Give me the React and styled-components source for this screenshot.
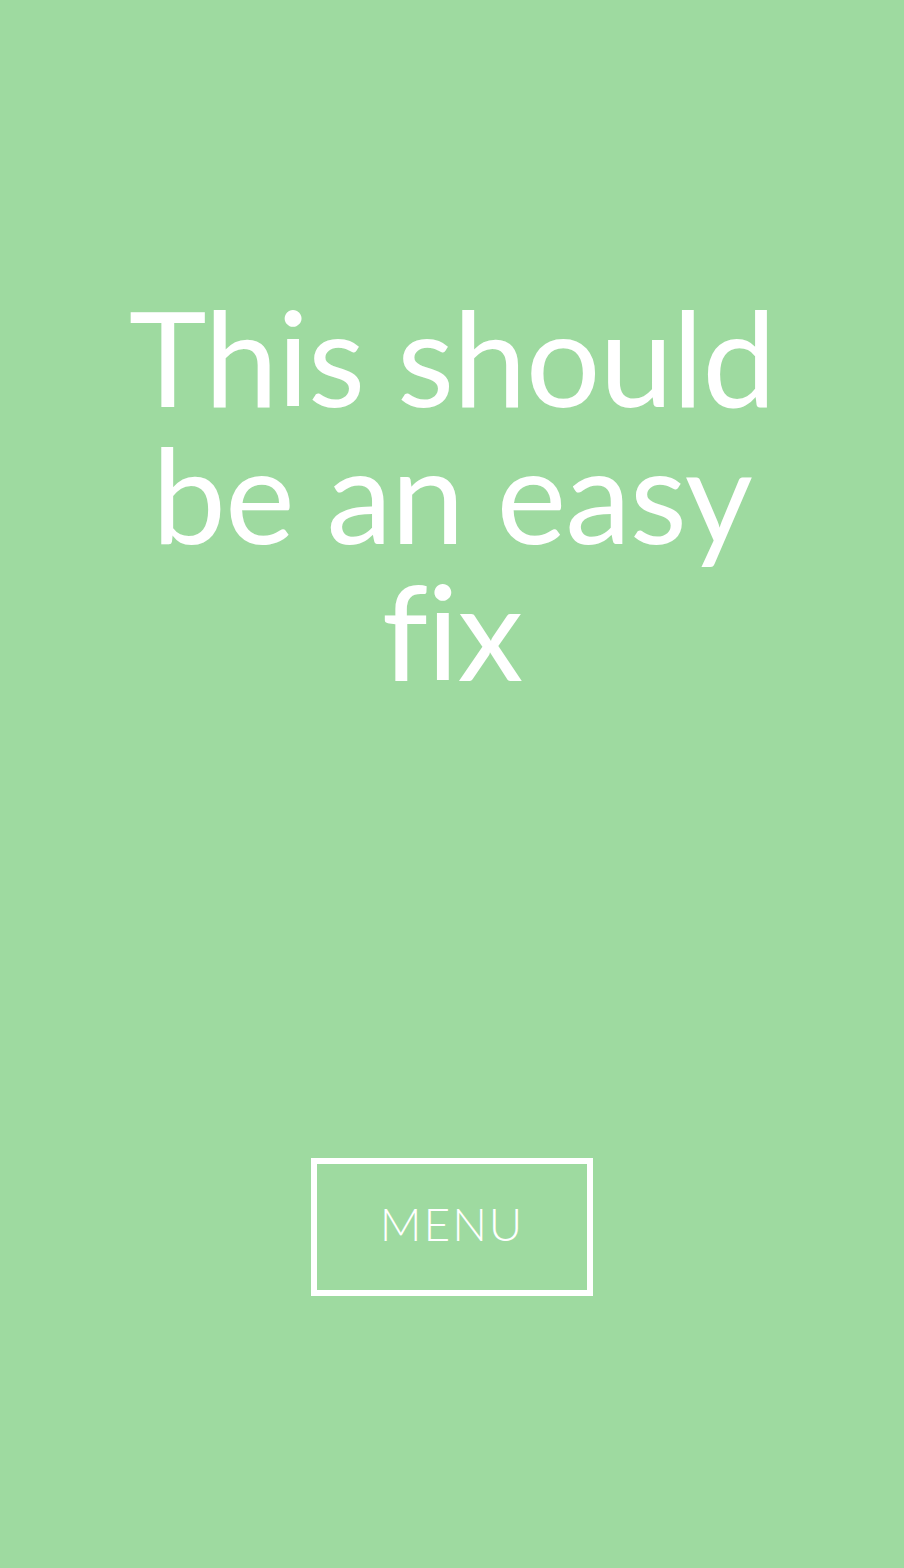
import React from "react";
import styled, { createGlobalStyle } from "styled-components";

const Global = createGlobalStyle`
  html, body { margin: 0; padding: 0; }
  body { background: #9edaa0; font-family: "Lato", "Noto Sans", sans-serif; }
`;

const Page = styled.main`
  min-height: 1568px;
  box-sizing: border-box;
  background: #9edaa0;
  display: flex;
  flex-direction: column;
  align-items: center;
  padding-top: 288px;
`;

const Title = styled.h1`
  margin: 0;
  width: 680px;
  color: #ffffff;
  font-family: "Lato", "Noto Sans", sans-serif;
  font-weight: 400;
  font-size: 132px;
  line-height: 137px;
  letter-spacing: -1px;
  text-align: center;
`;

const MenuButton = styled.button`
  margin-top: 459px;
  width: 282px;
  height: 138px;
  box-sizing: border-box;
  border: 6px solid #ffffff;
  background: transparent;
  color: #ffffff;
  font-family: "Lato", "Noto Sans", sans-serif;
  font-weight: 300;
  font-size: 46px;
  letter-spacing: 2px;
  padding: 0 0 8px;
  cursor: pointer;
`;

export default function App() {
  return (
    <>
      <Global />
      <Page>
        <Title>This should be an easy fix</Title>
        <MenuButton>MENU</MenuButton>
      </Page>
    </>
  );
}
